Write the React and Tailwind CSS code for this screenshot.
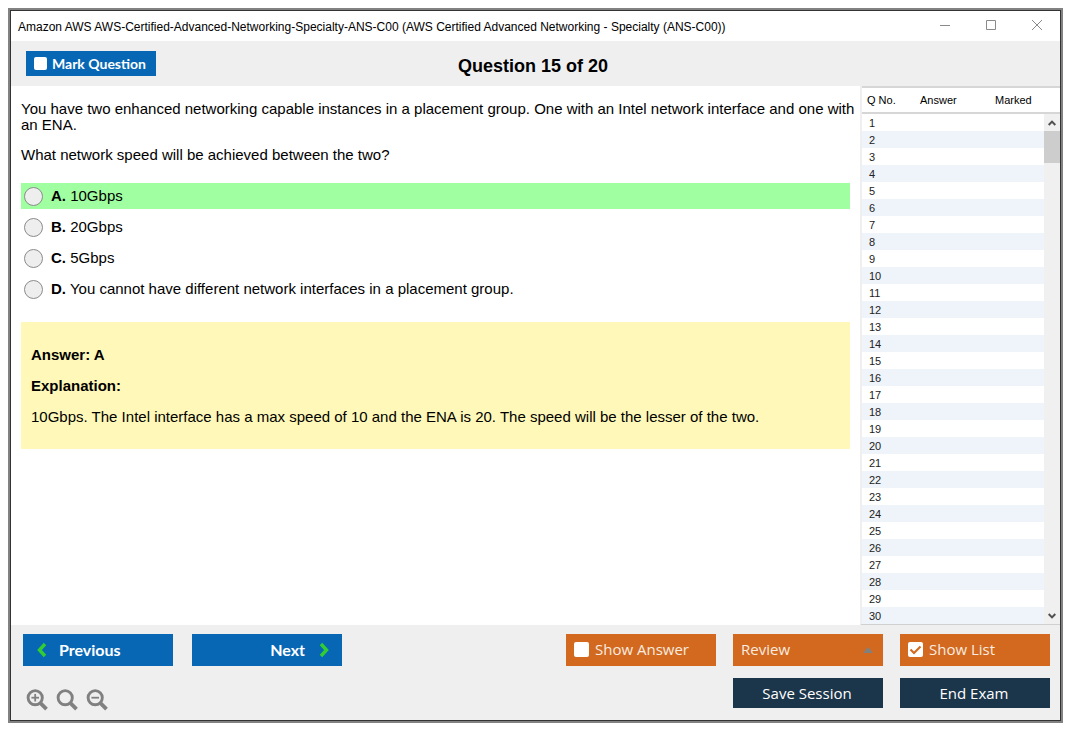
import { useState } from "react";

const options = [
  { id: "A", text: "10Gbps" },
  { id: "B", text: "20Gbps" },
  { id: "C", text: "5Gbps" },
  {
    id: "D",
    text: "You cannot have different network interfaces in a placement group.",
  },
];

const correct = "A";
const rows = Array.from({ length: 30 }, (_, i) => i + 1);

function CheckBox({ className, ...props }) {
  return (
    <span className="grid shrink-0">
      <input
        type="checkbox"
        className={`peer col-start-1 row-start-1 appearance-none rounded-xs bg-white ${className}`}
        {...props}
      />
      <svg
        viewBox="0 0 15 15"
        className={`pointer-events-none invisible col-start-1 row-start-1 peer-checked:visible ${className}`}
        fill="none"
        stroke="#d2691e"
        strokeWidth="2"
      >
        <path d="M2.5 7.5 6 11l6.5-6.5" />
      </svg>
    </span>
  );
}

function Chevron({ flip }) {
  return (
    <svg
      viewBox="0 0 10 16"
      className={`h-4 w-[10px] ${flip ? "rotate-180" : ""}`}
      fill="none"
      stroke="#32cd32"
      strokeWidth="3.4"
    >
      <path d="M8 2 2.5 8 8 14" />
    </svg>
  );
}

function ZoomIcon({ sign }) {
  return (
    <svg
      viewBox="0 0 22 22"
      className="size-[22px]"
      fill="none"
      stroke="#808080"
    >
      <circle cx="9.2" cy="8.7" r="7.1" strokeWidth="2.9" />
      <path d="M14 13.7l6.5 6.5" strokeWidth="3.8" />
      {sign && <path d="M5.4 8.7H13" strokeWidth="1.8" />}
      {sign === "+" && <path d="M9.2 4.9v7.6" strokeWidth="1.8" />}
    </svg>
  );
}

function TitleBar() {
  return (
    <div className="flex h-[30px] items-center justify-between bg-white pr-[17px] pl-[7px]">
      <h1 className="pt-[2px] text-[12px]">
        Amazon AWS AWS-Certified-Advanced-Networking-Specialty-ANS-C00 (AWS
        Certified Advanced Networking - Specialty (ANS-C00))
      </h1>
      <div className="flex gap-[34px] text-[#8a8a8a]">
        <button aria-label="Minimize">
          <svg viewBox="0 0 12 12" className="size-3" stroke="currentColor">
            <path d="M1 5.5h10" />
          </svg>
        </button>
        <button aria-label="Maximize">
          <svg
            viewBox="0 0 12 12"
            className="size-3"
            fill="none"
            stroke="currentColor"
          >
            <path d="M1.5.5h9v9h-9z" />
          </svg>
        </button>
        <button aria-label="Close">
          <svg viewBox="0 0 12 12" className="size-3" stroke="currentColor">
            <path d="M1 0l10 10M11 0 1 10" />
          </svg>
        </button>
      </div>
    </div>
  );
}

function Question() {
  const [picked, setPicked] = useState("");

  return (
    <main className="min-w-0 flex-1 bg-white px-[10px] pt-[15px] text-[15px] leading-4">
      <div className="-mr-2 flex flex-col gap-[14px]">
        <p>
          You have two enhanced networking capable instances in a placement
          group. One with an Intel network interface and one with an ENA.
        </p>
        <p>What network speed will be achieved between the two?</p>
      </div>

      <div className="mt-5 flex flex-col gap-[5px]">
        {options.map((o) => (
          <label
            key={o.id}
            className={`flex h-[26px] items-center gap-2 pl-[3px] ${
              o.id === correct ? "bg-[#a0ffa0]" : ""
            }`}
          >
            <input
              type="radio"
              name="answer"
              checked={picked === o.id}
              onChange={() => setPicked(o.id)}
              className="size-[19px] shrink-0 appearance-none rounded-full border border-[#8a8a8a] bg-[#eeeeee] checked:border-[6px]"
            />
            <span>
              <b>{o.id}.</b> {o.text}
            </span>
          </label>
        ))}
      </div>

      <section className="mt-5 flex flex-col gap-[15px] bg-[#fff8b8] px-[10px] pt-[25px] pb-6">
        <p className="font-bold">Answer: {correct}</p>
        <p className="font-bold">Explanation:</p>
        <p>
          10Gbps. The Intel interface has a max speed of 10 and the ENA is 20.
          The speed will be the lesser of the two.
        </p>
      </section>
    </main>
  );
}

function QuestionList() {
  return (
    <aside className="flex w-[200px] shrink-0 border-b border-l-2 border-b-[#d0d0d0] border-l-[#efefef] bg-white">
      <table className="flex-1 table-fixed border-separate border-spacing-0 text-[11px] text-[#222]">
        <thead>
          <tr className="h-7 text-left text-black">
            <th className="w-[54px] border-t-2 border-b-2 border-[#d6d6d6] pl-[5px] font-normal">
              Q No.
            </th>
            <th className="w-[75px] border-t-2 border-b-2 border-[#d6d6d6] pl-1 font-normal">
              Answer
            </th>
            <th className="border-t-2 border-b-2 border-[#d6d6d6] pl-1 font-normal">
              Marked
            </th>
          </tr>
        </thead>
        <tbody>
          {rows.map((n) => (
            <tr key={n} className="h-[17px] leading-[15px] even:bg-[#eef4f9]">
              <td className="pt-[2px] pl-[7px]">{n}</td>
              <td></td>
              <td></td>
            </tr>
          ))}
        </tbody>
      </table>

      {/* Scroll bar */}
      <div className="flex w-4 flex-col">
        <div className="h-7 border-t-2 border-b-2 border-[#d6d6d6]"></div>
        <div className="flex flex-1 flex-col items-center bg-[#f0f0f0]">
          <button
            aria-label="Scroll up"
            className="grid h-[17px] place-items-center"
          >
            <svg
              viewBox="0 0 8 6"
              className="h-[6px] w-2"
              fill="none"
              stroke="#505050"
              strokeWidth="2"
            >
              <path d="M.7 5 4 1.6 7.3 5" />
            </svg>
          </button>
          <div className="h-8 w-full bg-[#cdcdcd]"></div>
          <button
            aria-label="Scroll down"
            className="mt-auto grid h-[17px] place-items-center"
          >
            <svg
              viewBox="0 0 8 6"
              className="h-[6px] w-2"
              fill="none"
              stroke="#505050"
              strokeWidth="2"
            >
              <path d="M.7 1 4 4.4 7.3 1" />
            </svg>
          </button>
        </div>
      </div>
    </aside>
  );
}

function Footer() {
  const [showAnswer, setShowAnswer] = useState(false);
  const [showList, setShowList] = useState(true);

  return (
    <footer className="flex justify-between bg-[#efefef] pt-[9px] pr-[10px] pb-[9px] pl-3 font-[Lato,sans-serif] text-[16px]">
      <div>
        <div className="flex gap-[19px] font-bold text-white">
          <button className="flex h-8 w-[150px] items-center gap-3 bg-[#0767b5] pl-[14px]">
            <Chevron />
            Previous
          </button>
          <button className="flex h-8 w-[150px] items-center justify-end gap-[14px] bg-[#0767b5] pr-[13px]">
            Next
            <Chevron flip />
          </button>
        </div>
        <div className="mt-[23px] flex gap-2 pl-[3px]">
          <button aria-label="Zoom in">
            <ZoomIcon sign="+" />
          </button>
          <button aria-label="Reset zoom">
            <ZoomIcon />
          </button>
          <button aria-label="Zoom out">
            <ZoomIcon sign="-" />
          </button>
        </div>
      </div>

      <div className="grid grid-cols-[150px_150px_150px] content-start gap-x-[17px] gap-y-3 font-['Open_Sans',sans-serif] text-[15px] text-[#f8ece0]">
        <label className="flex h-8 items-center gap-[6px] bg-[#d2691e] pb-[2px] pl-2">
          <CheckBox
            className="size-[15px]"
            checked={showAnswer}
            onChange={(e) => setShowAnswer(e.target.checked)}
          />
          Show Answer
        </label>
        <div className="grid h-8 items-center bg-[#d2691e]">
          <select
            aria-label="Review"
            className="col-start-1 row-start-1 h-8 appearance-none bg-transparent pb-[2px] pl-2"
          >
            <option>Review</option>
          </select>
          <svg
            viewBox="0 0 10 6"
            className="pointer-events-none col-start-1 row-start-1 mr-[10px] h-[6px] w-[10px] justify-self-end"
            fill="#808080"
          >
            <path d="M0 6 5 0l5 6z" />
          </svg>
        </div>
        <label className="flex h-8 items-center gap-[6px] bg-[#d2691e] pb-[2px] pl-2">
          <CheckBox
            className="size-[15px]"
            checked={showList}
            onChange={(e) => setShowList(e.target.checked)}
          />
          Show List
        </label>
        <button className="col-start-2 h-[30px] bg-[#1b354a] pr-[2px] text-white">
          Save Session
        </button>
        <button className="h-[30px] bg-[#1b354a] pr-[2px] text-white">
          End Exam
        </button>
      </div>
    </footer>
  );
}

export default function App() {
  return (
    <div className="min-h-screen bg-white py-2 pr-3 pl-2 font-['Liberation_Sans',Arial,sans-serif] text-black">
      <div className="border-2 border-[#828282]">
        <div className="border border-[#333]">
          <TitleBar />

          {/* Header */}
          <header className="grid h-[45px] grid-cols-[1fr_auto_1fr] items-center bg-[#efefef] pr-5 pl-[15px]">
            <label className="flex h-[25px] w-[130px] items-center gap-[5px] bg-[#0767b5] pl-2 font-[Lato,sans-serif] text-[14px] font-bold text-white">
              <CheckBox className="size-[13px]" />
              Mark Question
            </label>
            <h2 className="pt-[6px] text-[18px] font-bold">
              Question 15 of 20
            </h2>
          </header>

          <div className="flex">
            <Question />
            <QuestionList />
          </div>

          <Footer />
        </div>
      </div>
    </div>
  );
}
